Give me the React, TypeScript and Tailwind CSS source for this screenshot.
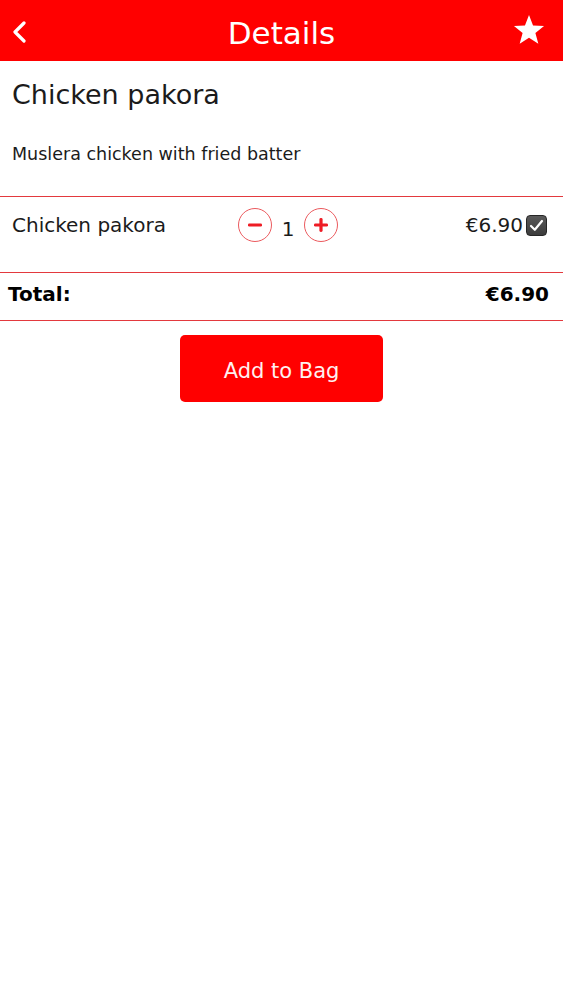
import { useState } from 'react'

function BackChevron() {
  return (
    <svg width="16" height="22" viewBox="0 0 16 22" fill="none">
      <path d="M12 2 L3 11 L12 20" stroke="white" strokeWidth="3.2" strokeLinecap="round" strokeLinejoin="round" />
    </svg>
  )
}

function Star() {
  return (
    <svg width="34" height="32" viewBox="0 0 24 23">
      <path
        d="M12 0.8 L14.9 8.2 L22.8 8.6 L16.6 13.6 L18.7 21.4 L12 17 L5.3 21.4 L7.4 13.6 L1.2 8.6 L9.1 8.2 Z"
        fill="white"
      />
    </svg>
  )
}

function StepButton({ kind, onClick }: { kind: 'minus' | 'plus'; onClick: () => void }) {
  return (
    <button
      type="button"
      onClick={onClick}
      className="w-[34px] h-[34px] rounded-full border border-[#eb5a5e] flex items-center justify-center bg-white"
    >
      <svg width="16" height="16" viewBox="0 0 16 16">
        {kind === 'minus' ? (
          <rect x="1" y="6.6" width="14" height="2.8" rx="1.2" fill="#ee1c25" />
        ) : (
          <>
            <rect x="1" y="6.4" width="14" height="3.2" rx="1.4" fill="#ee1c25" />
            <rect x="6.4" y="1" width="3.2" height="14" rx="1.4" fill="#ee1c25" />
          </>
        )}
      </svg>
    </button>
  )
}

function Checkbox() {
  return (
    <span className="w-[21px] h-[21px] rounded-[4px] bg-gradient-to-b from-[#5a5a5a] to-[#3c3c3c] border border-[#262626] flex items-center justify-center">
      <svg width="15" height="13" viewBox="0 0 15 13" fill="none">
        <path d="M2 7 L5.8 10.8 L13 2" stroke="white" strokeWidth="2.2" strokeLinecap="round" strokeLinejoin="round" />
      </svg>
    </span>
  )
}

export default function App() {
  const [qty, setQty] = useState(1)
  const price = 6.9
  const fmt = (v: number) => '€' + v.toFixed(2)

  return (
    <div className="min-h-[1000px] bg-white text-[#1b1b1b]" style={{ fontFamily: '"DejaVu Sans", Verdana, sans-serif' }}>
      {/* Header */}
      <div className="h-[61px] bg-[#ff0000] grid grid-cols-[64px_1fr_64px] items-center">
        <button type="button" className="pl-[12px] pt-[2px] flex items-center">
          <BackChevron />
        </button>
        <h1 className="text-center text-white text-[31px] leading-none pt-[6px]">Details</h1>
        <button type="button" className="flex justify-end pr-[17px] pb-[2px]">
          <Star />
        </button>
      </div>

      {/* Titel + beschrijving */}
      <div className="px-[12px] pt-[18px]">
        <h2 className="text-[27px] leading-[31px]">Chicken pakora</h2>
        <p className="text-[17.5px] leading-[20px] mt-[34px]">Muslera chicken with fried batter</p>
      </div>

      {/* Item rij */}
      <div className="mt-[32px] border-t border-[#e3393e] pt-[11px] pb-[30px] pl-[12px] pr-[16px] flex items-center">
        <span className="w-[226px] text-[20px] leading-[23px]">Chicken pakora</span>
        <div className="flex items-center h-[34px]">
          <StepButton kind="minus" onClick={() => setQty(Math.max(1, qty - 1))} />
          <span className="w-[32px] text-center text-[20px] leading-[23px] pt-[8px]">{qty}</span>
          <StepButton kind="plus" onClick={() => setQty(qty + 1)} />
        </div>
        <div className="flex-1 flex items-center justify-end gap-[3px]">
          <span className="text-[20px] leading-[23px]">{fmt(price * qty)}</span>
          <Checkbox />
        </div>
      </div>

      {/* Totaal */}
      <div className="border-t border-b border-[#e3393e] pt-[10px] pb-[14px] pl-[8px] pr-[14px] flex items-center justify-between font-bold text-black text-[20px] leading-[23px]">
        <span>Total:</span>
        <span>{fmt(price * qty)}</span>
      </div>

      <div className="flex justify-center pt-[14px]">
        <button
          type="button"
          className="w-[203px] h-[67px] rounded-[5px] bg-[#ff0000] text-[#fff0f0] text-[21px] pt-[6px]"
        >
          Add to Bag
        </button>
      </div>
    </div>
  )
}
